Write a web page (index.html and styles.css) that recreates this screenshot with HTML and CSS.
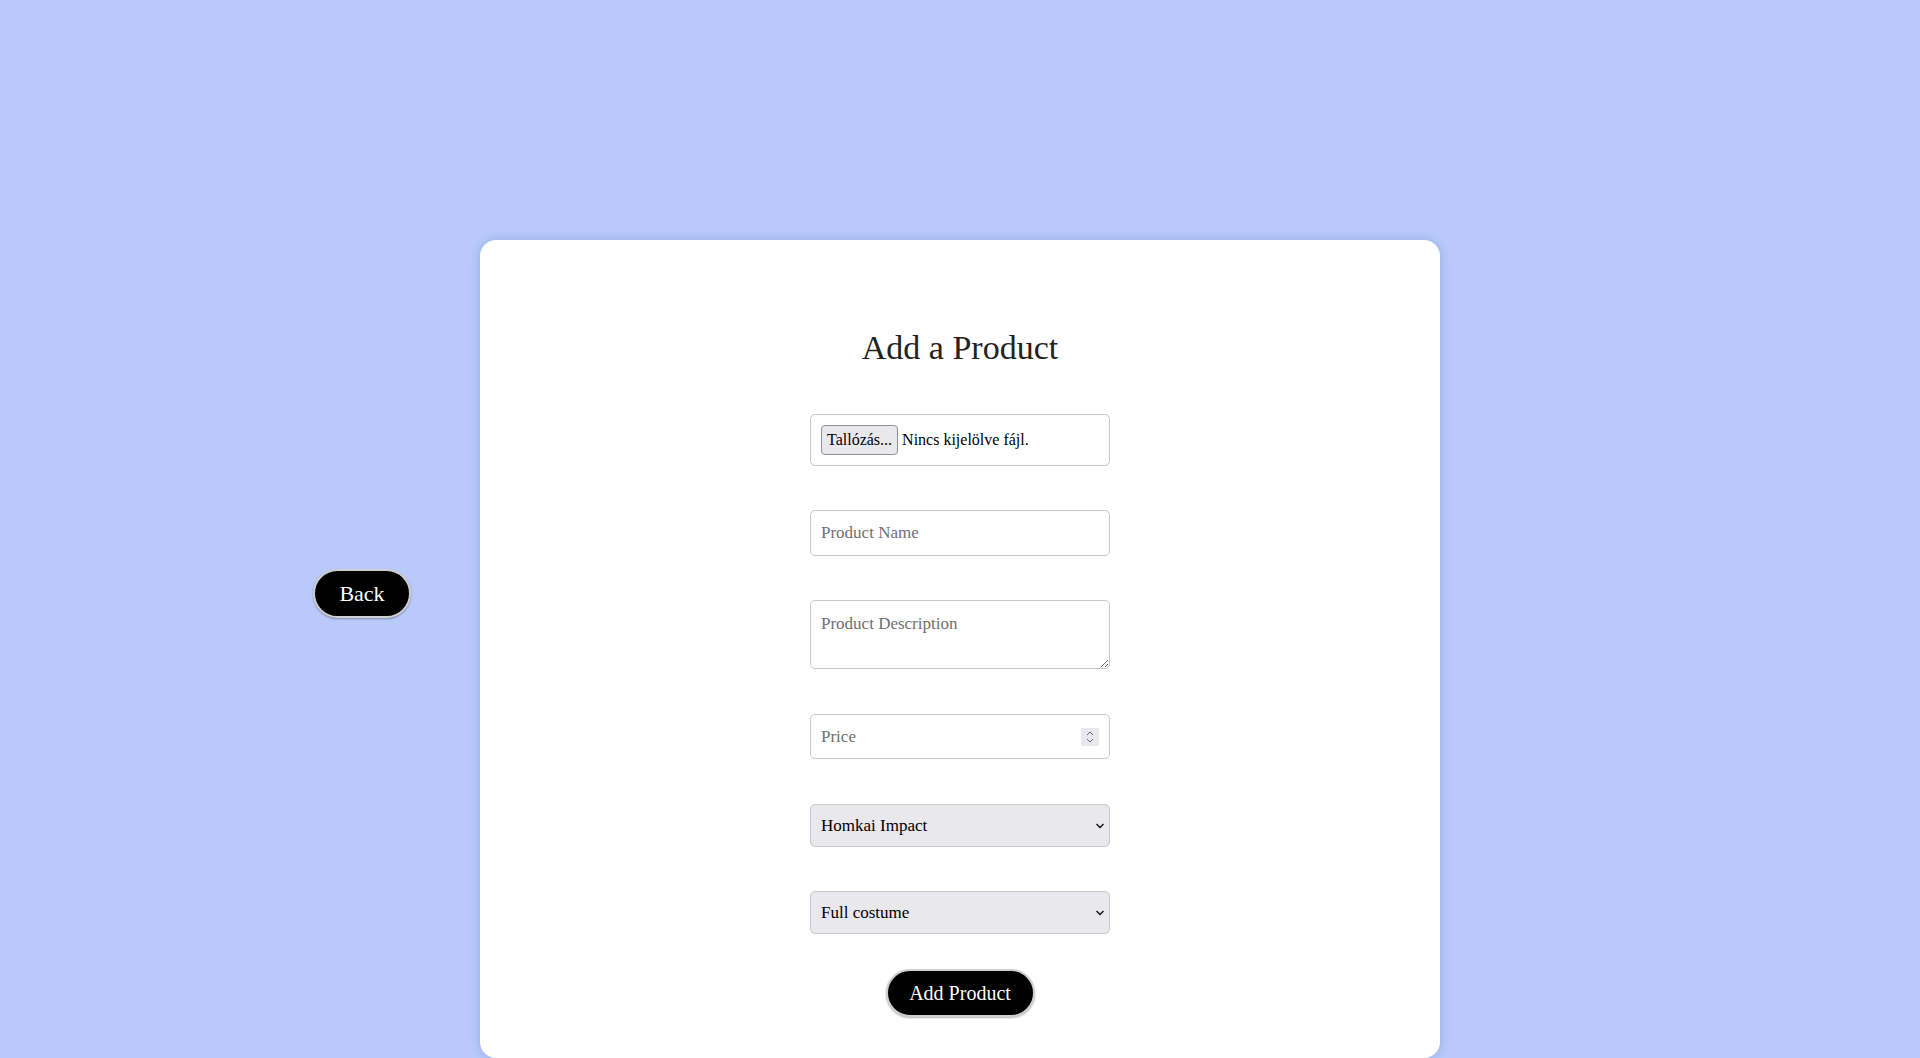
FILE: index.html
```html
<!DOCTYPE html>
<html lang="en">
<head>
    <meta charset="UTF-8">
    <meta name="viewport" content="width=device-width, initial-scale=1.0">
    <title>Add a Product</title>
    <link rel="stylesheet" href="styles.css">
</head>
<body>
    <div class="page">
        <div class="side">
            <button class="btn-back">Back</button>
        </div>
        <main class="card">
            <h1>Add a Product</h1>
            <form class="product-form">
                <label class="file-field">
                    <input type="file" class="file-input">
                    <span class="file-btn">Tallózás...</span>
                    <span class="file-name">Nincs kijelölve fájl.</span>
                </label>
                <input type="text" class="field" placeholder="Product Name">
                <textarea class="field field-area" placeholder="Product Description"></textarea>
                <div class="price-wrap">
                    <input type="number" class="field field-price" placeholder="Price">
                    <span class="spinner">
                        <svg width="10" height="14" viewBox="0 0 10 14"><path d="M2 5l3-3 3 3M2 9l3 3 3-3" fill="none" stroke="#6b6b73" stroke-width="1"/></svg>
                    </span>
                </div>
                <div class="select-wrap">
                    <select class="field field-select">
                        <option>Homkai Impact</option>
                        <option>Genshin Impact</option>
                    </select>
                    <svg class="chevron" width="10" height="6" viewBox="0 0 10 6"><path d="M1.5 1l3.5 3.5L8.5 1" fill="none" stroke="#111" stroke-width="1.4"/></svg>
                </div>
                <div class="select-wrap">
                    <select class="field field-select">
                        <option>Full costume</option>
                        <option>Wig</option>
                    </select>
                    <svg class="chevron" width="10" height="6" viewBox="0 0 10 6"><path d="M1.5 1l3.5 3.5L8.5 1" fill="none" stroke="#111" stroke-width="1.4"/></svg>
                </div>
                <button type="button" class="btn-add">Add Product</button>
            </form>
        </main>
        <div class="side"></div>
    </div>
</body>
</html>
```

FILE: styles.css
```css
html, body {
    margin: 0;
    padding: 0;
    height: 1058px;
    overflow: hidden;
}
body {
    font-family: "Liberation Serif", "DejaVu Serif", serif;
    background-color: #b8c9fa;
}
.page {
    display: grid;
    grid-template-columns: 1fr 960px 1fr;
    padding-top: 240px;
    box-sizing: border-box;
    height: 1058px;
}
.side {
    display: flex;
    justify-content: flex-end;
    align-items: flex-start;
}
.btn-back {
    margin-top: 329px;
    margin-right: 69px;
    width: 98px;
    height: 49px;
    background-color: #000;
    color: #fff;
    border: 2px solid #cfcfcf;
    border-radius: 25px;
    font-family: inherit;
    font-size: 22px;
    cursor: pointer;
    box-shadow: 0 1px 2px rgba(0, 0, 0, 0.3);
}
.card {
    background-color: #fff;
    border-radius: 16px;
    height: 818px;
    box-sizing: border-box;
    padding-top: 87px;
    box-shadow: 0 0 10px rgba(60, 80, 160, 0.25);
    text-align: center;
}
.card h1 {
    margin: 0 0 46px;
    font-size: 34px;
    font-weight: normal;
    color: #222;
    line-height: 41px;
}
.product-form {
    width: 300px;
    margin: 0 auto;
    display: flex;
    flex-direction: column;
    align-items: stretch;
    gap: 44px;
    text-align: left;
}
.file-field {
    display: flex;
    align-items: center;
    height: 52px;
    box-sizing: border-box;
    padding: 0 10px;
    border: 1px solid #c8c8c8;
    border-radius: 5px;
    font-size: 16px;
    color: #000;
}
.file-input {
    display: none;
}
.file-btn {
    display: inline-flex;
    align-items: center;
    height: 30px;
    box-sizing: border-box;
    padding: 0 5px;
    background-color: #e9e9ed;
    border: 1px solid #8f8f9d;
    border-radius: 4px;
    margin-right: 4px;
}
.field {
    width: 100%;
    box-sizing: border-box;
    height: 46px;
    padding: 0 10px;
    border: 1px solid #c8c8c8;
    border-radius: 5px;
    font-family: inherit;
    font-size: 17px;
    color: #000;
    background-color: #fff;
    outline: none;
}
.field::placeholder {
    color: #707070;
}
.field-area {
    display: block;
    height: 69px;
    padding: 13px 10px 9px;
    resize: vertical;
}
.price-wrap {
    position: relative;
    height: 45px;
    margin-top: 1px;
}
.field-price {
    height: 45px;
    -moz-appearance: textfield;
}
.field-price::-webkit-inner-spin-button,
.field-price::-webkit-outer-spin-button {
    -webkit-appearance: none;
    margin: 0;
}
.spinner {
    position: absolute;
    right: 11px;
    top: 14px;
    width: 18px;
    height: 18px;
    background-color: #e9e9ed;
    display: flex;
    align-items: center;
    justify-content: center;
}
.select-wrap {
    position: relative;
    height: 43px;
}
.price-wrap + .select-wrap {
    margin-top: 1px;
}
.field-select {
    height: 43px;
    -webkit-appearance: none;
    appearance: none;
    background-color: #e9e9ed;
}
.chevron {
    position: absolute;
    right: 5px;
    top: 19px;
    pointer-events: none;
}
.btn-add {
    align-self: center;
    margin-top: -9px;
    width: 149px;
    height: 48px;
    background-color: #000;
    color: #fff;
    border: 2px solid #cfcfcf;
    border-radius: 25px;
    font-family: inherit;
    font-size: 20px;
    cursor: pointer;
    box-shadow: 0 1px 2px rgba(0, 0, 0, 0.3);
}
```
